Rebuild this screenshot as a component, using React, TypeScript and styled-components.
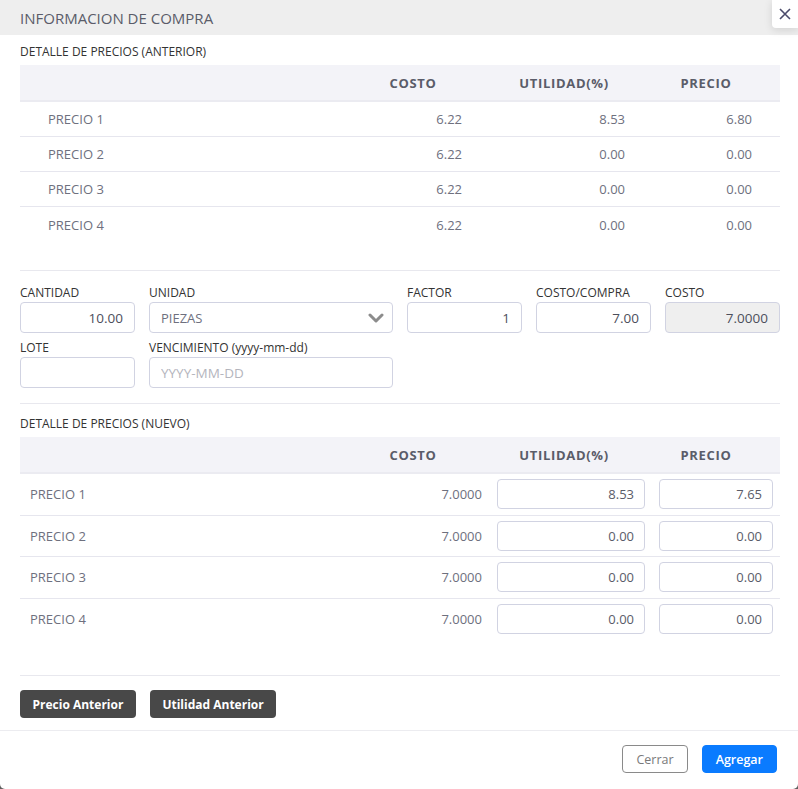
import styled, { createGlobalStyle } from 'styled-components';

const GlobalStyle = createGlobalStyle`
  html, body {
    margin: 0;
    padding: 0;
    background: #5f5f5f;
  }
  * {
    box-sizing: border-box;
  }
  body {
    font-family: "Open Sans", "Noto Sans", Arial, sans-serif;
  }
`;

const Modal = styled.div`
  position: relative;
  width: 798px;
  min-height: 789px;
  background: #ffffff;
  border-radius: 0 0 5px 5px;
  display: flex;
  flex-direction: column;
`;

const Header = styled.div`
  height: 35px;
  background: #eeeeee;
  padding-left: 20px;
  display: flex;
  align-items: center;
`;

const Title = styled.h1`
  margin: 0;
  font-size: 15px;
  font-weight: 400;
  color: #5a5c69;
`;

const CloseButton = styled.button`
  position: absolute;
  top: 0;
  right: 0;
  width: 26px;
  height: 28px;
  border: none;
  padding: 0;
  background: #ffffff;
  border-radius: 0 0 0 4px;
  box-shadow: 0 2px 8px rgba(0, 0, 0, 0.12);
  display: flex;
  align-items: center;
  justify-content: center;
  color: #4b4b6b;
`;

const Body = styled.div`
  padding: 0 18px 0 20px;
  flex: 1;
`;

const Section = styled.div<{ $pt: number; $pb: number }>`
  padding-top: ${(p) => p.$pt}px;
  padding-bottom: ${(p) => p.$pb}px;
  border-bottom: 1px solid #e8e8ee;
`;

const SectionTitle = styled.div`
  font-size: 12px;
  color: #333333;
  line-height: 14px;
  margin-bottom: 6px;
`;

const TableHead = styled.div`
  display: grid;
  grid-template-columns: 1fr 154px 162px 128px;
  height: 37px;
  background: #f3f3f8;
  border-bottom: 2px solid #ebebf1;
  align-items: center;
`;

const HeadCell = styled.div<{ $shift?: number }>`
  font-size: 13px;
  font-weight: 700;
  letter-spacing: 0.7px;
  color: #5a5c69;
  text-align: center;
  padding-right: ${(p) => (p.$shift ?? 0) * 2}px;
`;

const Row = styled.div<{ $h: number }>`
  display: grid;
  grid-template-columns: 1fr 154px 162px 128px;
  height: ${(p) => p.$h}px;
  align-items: center;
  border-bottom: 1px solid #e6e6ee;

  &:last-child {
    border-bottom: none;
  }
`;

const LabelCell = styled.div<{ $pl: number }>`
  padding-left: ${(p) => p.$pl}px;
  font-size: 13px;
  color: #6e707e;
`;

const ValueCell = styled.div<{ $pr: number }>`
  text-align: right;
  padding-right: ${(p) => p.$pr}px;
  font-size: 13px;
  color: #6e707e;
`;

const InputCell = styled.div`
  padding: 0 7px;
`;

const NumInput = styled.input`
  width: 100%;
  height: 30px;
  border: 1px solid #d1d3e2;
  border-radius: 4px;
  text-align: right;
  padding: 0 10px;
  font-family: inherit;
  font-size: 13px;
  color: #5a5c69;
  background: #fff;
  outline: none;
`;

const FormGrid = styled.div`
  display: grid;
  grid-template-columns: repeat(6, 115px);
  column-gap: 14px;
  row-gap: 8px;
`;

const Field = styled.div<{ $span?: number }>`
  grid-column: span ${(p) => p.$span ?? 1};
  display: flex;
  flex-direction: column;
`;

const FieldLabel = styled.label`
  font-size: 12px;
  line-height: 14px;
  color: #333333;
  margin-bottom: 2px;
`;

const Lower = styled.span`
  text-transform: none;
`;

const FormInput = styled.input<{ $disabled?: boolean }>`
  width: 100%;
  height: 31px;
  border: 1px solid #d1d3e2;
  border-radius: 4px;
  padding: 0 11px;
  font-family: inherit;
  font-size: 13.5px;
  color: #4d4f5c;
  text-align: right;
  background: ${(p) => (p.$disabled ? '#efefef' : '#ffffff')};
  outline: none;

  &::placeholder {
    color: #b4b5bd;
    text-transform: uppercase;
  }
`;

const DateInput = styled(FormInput)`
  text-align: left;
`;

const SelectBox = styled.div`
  height: 31px;
  border: 1px solid #d1d3e2;
  border-radius: 4px;
  padding: 0 8px 0 11px;
  display: flex;
  align-items: center;
  justify-content: space-between;
  font-size: 13px;
  color: #6e707e;
`;

const ActionBar = styled.div`
  display: flex;
  gap: 14px;
  padding: 14px 0 12px;
`;

const DarkButton = styled.button`
  height: 28px;
  padding: 0 12.5px;
  border: none;
  border-radius: 4px;
  background: #484848;
  color: #ffffff;
  font-family: inherit;
  font-size: 12px;
  font-weight: 700;
`;

const Footer = styled.div`
  border-top: 1px solid #ececf0;
  display: flex;
  justify-content: flex-end;
  gap: 14px;
  padding: 14px 21px 16px 0;
`;

const FooterButton = styled.button<{ $primary?: boolean }>`
  height: 28px;
  padding: 0 13px;
  border-radius: 4px;
  font-family: inherit;
  font-size: 12.5px;
  border: 1px solid ${(p) => (p.$primary ? '#0a7bff' : '#8a8a8a')};
  background: ${(p) => (p.$primary ? '#0a7bff' : '#ffffff')};
  color: ${(p) => (p.$primary ? '#ffffff' : '#7a7a7a')};
  font-weight: ${(p) => (p.$primary ? 600 : 400)};
`;

const anterior = [
  { name: 'PRECIO 1', costo: '6.22', util: '8.53', precio: '6.80' },
  { name: 'PRECIO 2', costo: '6.22', util: '0.00', precio: '0.00' },
  { name: 'PRECIO 3', costo: '6.22', util: '0.00', precio: '0.00' },
  { name: 'PRECIO 4', costo: '6.22', util: '0.00', precio: '0.00' },
];

const nuevo = [
  { name: 'PRECIO 1', costo: '7.0000', util: '8.53', precio: '7.65' },
  { name: 'PRECIO 2', costo: '7.0000', util: '0.00', precio: '0.00' },
  { name: 'PRECIO 3', costo: '7.0000', util: '0.00', precio: '0.00' },
  { name: 'PRECIO 4', costo: '7.0000', util: '0.00', precio: '0.00' },
];

function Head() {
  return (
    <TableHead>
      <div />
      <HeadCell>COSTO</HeadCell>
      <HeadCell $shift={7}>UTILIDAD(%)</HeadCell>
      <HeadCell $shift={10}>PRECIO</HeadCell>
    </TableHead>
  );
}

export default function App() {
  return (
    <>
      <GlobalStyle />
      <Modal>
        <Header>
          <Title>INFORMACION DE COMPRA</Title>
        </Header>
        <CloseButton aria-label="Cerrar">
          <svg width="12" height="12" viewBox="0 0 12 12">
            <path d="M1 1L11 11M11 1L1 11" stroke="currentColor" strokeWidth="1.6" />
          </svg>
        </CloseButton>
        <Body>
          <Section $pt={10} $pb={28}>
            <SectionTitle>DETALLE DE PRECIOS (ANTERIOR)</SectionTitle>
            <Head />
            {anterior.map((r) => (
              <Row key={r.name} $h={35}>
                <LabelCell $pl={28}>{r.name}</LabelCell>
                <ValueCell $pr={28}>{r.costo}</ValueCell>
                <ValueCell $pr={27}>{r.util}</ValueCell>
                <ValueCell $pr={28}>{r.precio}</ValueCell>
              </Row>
            ))}
          </Section>

          <Section $pt={15} $pb={15}>
            <FormGrid>
              <Field>
                <FieldLabel>CANTIDAD</FieldLabel>
                <FormInput defaultValue="10.00" />
              </Field>
              <Field $span={2}>
                <FieldLabel>UNIDAD</FieldLabel>
                <SelectBox>
                  <span>PIEZAS</span>
                  <svg width="16" height="10" viewBox="0 0 16 10">
                    <path d="M2 2L8 8L14 2" fill="none" stroke="#8c8c8c" strokeWidth="3" strokeLinecap="round" strokeLinejoin="round" />
                  </svg>
                </SelectBox>
              </Field>
              <Field>
                <FieldLabel>FACTOR</FieldLabel>
                <FormInput defaultValue="1" />
              </Field>
              <Field>
                <FieldLabel>COSTO/COMPRA</FieldLabel>
                <FormInput defaultValue="7.00" />
              </Field>
              <Field>
                <FieldLabel>COSTO</FieldLabel>
                <FormInput $disabled defaultValue="7.0000" readOnly />
              </Field>
              <Field>
                <FieldLabel>LOTE</FieldLabel>
                <FormInput />
              </Field>
              <Field $span={2}>
                <FieldLabel>
                  VENCIMIENTO <Lower>(yyyy-mm-dd)</Lower>
                </FieldLabel>
                <DateInput placeholder="YYYY-MM-DD" />
              </Field>
            </FormGrid>
          </Section>

          <Section $pt={13} $pb={35}>
            <SectionTitle>DETALLE DE PRECIOS (NUEVO)</SectionTitle>
            <Head />
            {nuevo.map((r) => (
              <Row key={r.name} $h={41.5}>
                <LabelCell $pl={10}>{r.name}</LabelCell>
                <ValueCell $pr={8}>{r.costo}</ValueCell>
                <InputCell>
                  <NumInput defaultValue={r.util} />
                </InputCell>
                <InputCell>
                  <NumInput defaultValue={r.precio} />
                </InputCell>
              </Row>
            ))}
          </Section>

          <ActionBar>
            <DarkButton>Precio Anterior</DarkButton>
            <DarkButton>Utilidad Anterior</DarkButton>
          </ActionBar>
        </Body>
        <Footer>
          <FooterButton>Cerrar</FooterButton>
          <FooterButton $primary>Agregar</FooterButton>
        </Footer>
      </Modal>
    </>
  );
}
